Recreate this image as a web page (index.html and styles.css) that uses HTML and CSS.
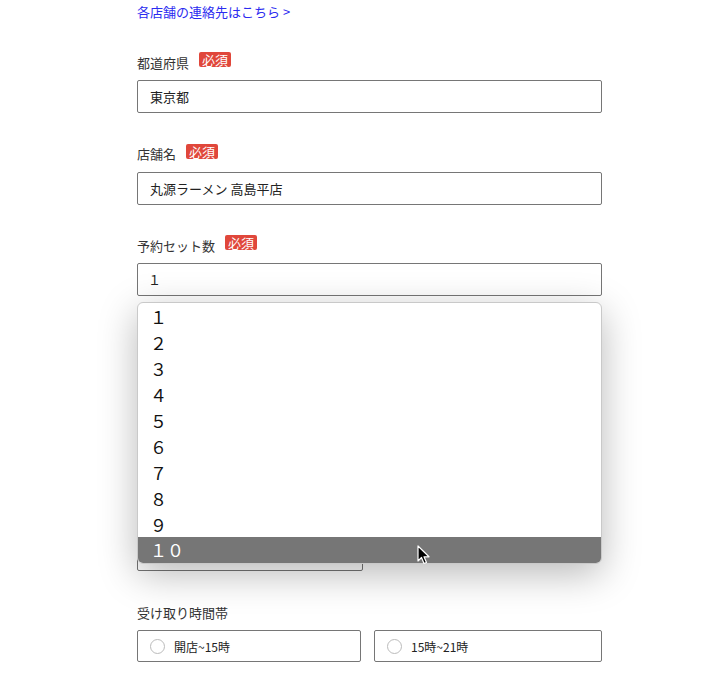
FILE: index.html
```html
<!DOCTYPE html>
<html lang="ja">

<head>
  <meta charset="UTF-8">
  <meta name="viewport" content="width=device-width, initial-scale=1.0">
  <title>ご予約フォーム</title>
  <link rel="stylesheet" href="styles.css">
</head>

<body>
  <main class="form">
    <a class="shop-link" href="#">各店舗の連絡先はこちら &gt;</a>

    <div class="field">
      <label class="field-label">都道府県 <span class="required">必須</span></label>
      <div class="input">東京都</div>
    </div>

    <div class="field">
      <label class="field-label">店舗名 <span class="required">必須</span></label>
      <div class="input">丸源ラーメン 高島平店</div>
    </div>

    <div class="field select-field">
      <label class="field-label">予約セット数 <span class="required">必須</span></label>
      <div class="input select-value">１</div>
      <ul class="select-list" id="setList"></ul>
    </div>

    <div class="field">
      <label class="field-label">お名前 <span class="required">必須</span></label>
      <div class="input"></div>
    </div>

    <div class="field">
      <label class="field-label">電話番号 <span class="required">必須</span></label>
      <div class="input"></div>
    </div>

    <div class="field">
      <label class="field-label">受け取り日 <span class="required">必須</span></label>
      <div class="input half"></div>
    </div>

    <div class="field">
      <label class="field-label">受け取り時間帯</label>
      <div class="radio-row">
        <label class="radio-box"><span class="radio"></span>開店~15時</label>
        <label class="radio-box"><span class="radio"></span>15時~21時</label>
      </div>
    </div>
  </main>

  <!-- mouse pointer over the open list -->
  <svg class="pointer" width="14" height="21" viewBox="0 0 14 21">
    <path d="M1 1 L1 16 L4.5 12.5 L7 18.5 L9.5 17.5 L7 11.8 L12 11.8 Z" fill="#000" stroke="#fff" stroke-width="1.2" stroke-linejoin="round" />
  </svg>

  <script>
    const digits = ["１", "２", "３", "４", "５", "６", "７", "８", "９", "１０"];
    const list = document.getElementById("setList");
    digits.forEach((d, i) => {
      const li = document.createElement("li");
      li.textContent = d;
      if (i === digits.length - 1) li.className = "active";
      list.appendChild(li);
    });
  </script>
</body>

</html>
```

FILE: styles.css
```css
* {
  box-sizing: border-box;
  margin: 0;
  padding: 0;
}

body {
  background: #fff;
  font-family: "Noto Sans CJK JP", "Noto Sans", sans-serif;
  color: #333;
  font-size: 13px;
}

.form {
  width: 465px;
  margin-left: 137px;
  padding-top: 3px;
}

.shop-link {
  display: block;
  color: #2b2bf0;
  text-decoration: none;
  line-height: 18px;
  margin-bottom: 32px;
}

.field {
  margin-bottom: 31.7px;
}

.field-label {
  display: flex;
  align-items: center;
  gap: 10px;
  height: 18px;
  margin-bottom: 9px;
}

.required {
  background: #e0473b;
  color: #fff;
  font-size: 13px;
  line-height: 15px;
  height: 15px;
  padding: 0 3px;
  border-radius: 2px;
  overflow: hidden;
  margin-top: -5px;
}

.input {
  height: 33px;
  border: 1px solid #767676;
  border-radius: 2px;
  padding: 0 12px;
  display: flex;
  align-items: center;
  color: #222;
}

.input.half {
  width: 226px;
}

.select-field {
  position: relative;
}

.select-value {
  padding-left: 10px;
}

.select-list {
  list-style: none;
  position: absolute;
  left: 0;
  right: 0;
  top: 66px;
  background: #fff;
  border: 1px solid #c9c9c9;
  border-radius: 6px;
  overflow: hidden;
  padding-top: 1px;
  box-shadow: 0 10px 38px rgba(0, 0, 0, 0.28);
  z-index: 5;
}

.select-list li {
  height: 25.9px;
  line-height: 25.9px;
  padding-left: 12px;
  font-size: 17px;
  color: #111;
}

.select-list li.active {
  background: #767676;
  color: #fff;
}

.radio-row {
  display: grid;
  grid-template-columns: 224px 228px;
  gap: 13px;
}

.radio-box {
  height: 32px;
  border: 1px solid #767676;
  border-radius: 2px;
  display: flex;
  align-items: center;
  padding-left: 12px;
  gap: 9px;
  font-size: 12px;
  color: #222;
}

.radio {
  width: 15px;
  height: 15px;
  border: 1px solid #bbb;
  border-radius: 50%;
}

.pointer {
  position: absolute;
  left: 417px;
  top: 545px;
  z-index: 10;
}
```
